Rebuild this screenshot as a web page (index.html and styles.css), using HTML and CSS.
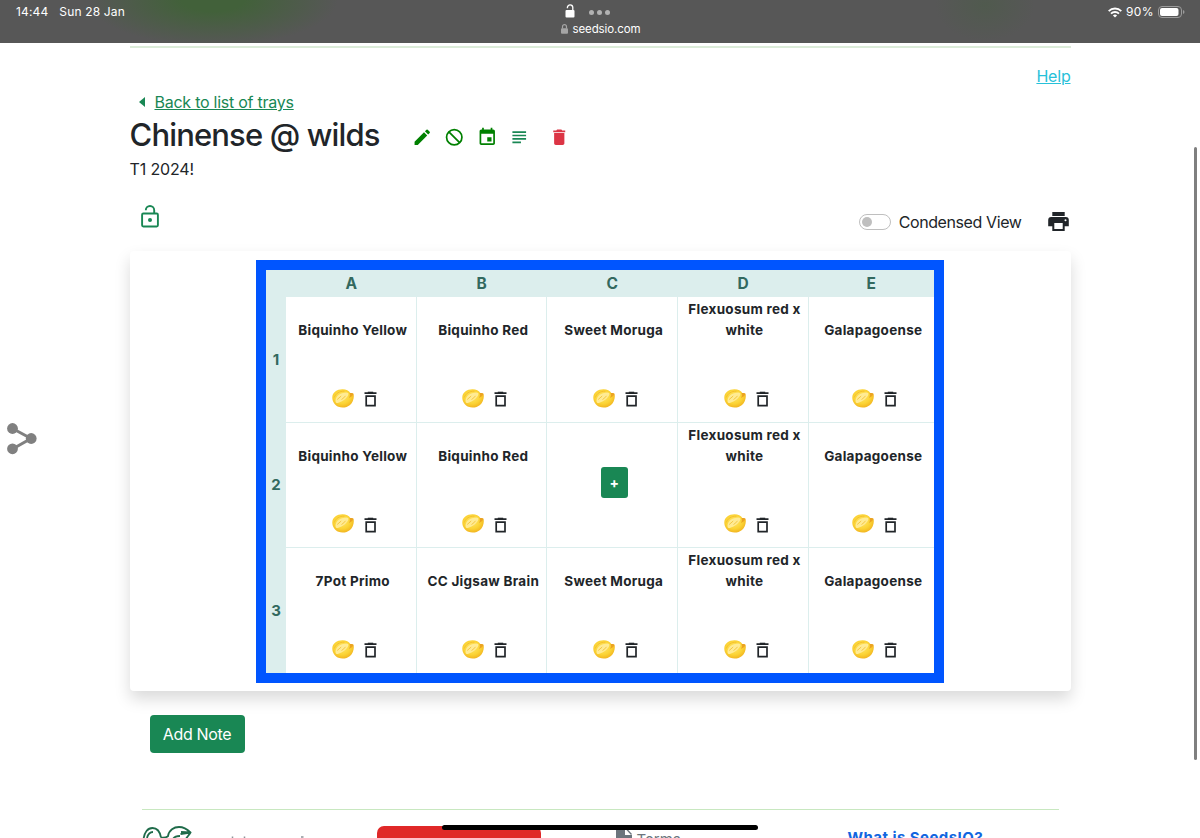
FILE: index.html
```html
<!DOCTYPE html>
<html lang="en">
<head>
  <meta charset="UTF-8">
  <meta name="viewport" content="width=device-width, initial-scale=1.0">
  <title>Chinense @ wilds</title>
  <link rel="stylesheet" href="styles.css">
</head>
<body>

  <svg class="sprite">
    <defs>
      <radialGradient id="seedFill" cx="45%" cy="40%" r="65%">
        <stop offset="0" stop-color="#ffe66d"/>
        <stop offset="0.6" stop-color="#fbd334"/>
        <stop offset="1" stop-color="#f0ae1c"/>
      </radialGradient>
    </defs>
    <symbol id="seed" viewBox="0 0 22 19">
      <path fill="url(#seedFill)" d="M.300 8.500C.300 3.500 5 .300 10.500.300c3.500 0 6.500 1.500 8 3.900 1.700-.200 3 .3 3.200 1.600.5 3.200-.7 7.700-3.700 10.200-3 2.600-7.900 3.300-11.500 1.800C2.700 16.300.300 12.500.300 8.500z"/>
      <path fill="#ffeb94" d="M3.500 12C3.500 7.500 8 3.800 14.500 3.600c1.600 0 2.300.900 1.800 2.200-1 3-5.300 6.900-10.500 8.200-1.400.300-2.300-.500-2.300-2z"/>
      <path fill="none" stroke="#f2c23d" stroke-width=".9" d="M5.200 10.500l4-3.500M9.500 10.500c1.800-1 3-2.200 4-3.700"/>
      <path fill="none" stroke="#f3bd2c" stroke-width=".9" d="M2.300 8.500C3.500 4.500 7.500 2 12.500 2.200"/>
      <path fill="#eba322" d="M17.500 4.200c.800 1.500.5 3-.6 4.800 1.800-.700 3.500-2 4.800-4-.8-1-2.500-1.200-4.200-.800z"/>
    </symbol>
    <symbol id="bin" viewBox="0 0 13 16">
      <path fill="none" stroke="#212529" stroke-width="1.700" d="M2.200 5.100h8.800v9.500H2.200zM.500 2.200h12"/>
      <path fill="#212529" d="M3.800.700h5.400v1.600H3.800z"/>
    </symbol>
  </svg>

  <header class="status-bar">
    <div class="status-left"><span>14:44</span><span>Sun 28 Jan</span></div>
    <div class="status-center">
      <div class="status-icons">
        <svg width="10" height="14" viewBox="0 0 10 14"><path fill="#fff" d="M1.500 6h7q1 0 1 1v5.500q0 1-1 1h-7q-1 0-1-1V7q0-1 1-1z"/><path fill="none" stroke="#fff" stroke-width="1.300" d="M7.800 6.500V3.600a2.700 2.700 0 0 0-5.400 0v.600"/></svg>
        <span class="dots"><i></i><i></i><i></i></span>
      </div>
      <div class="site">
        <svg width="7" height="10" viewBox="0 0 7 10"><rect y="4.200" width="7" height="5.600" rx="1" fill="#a5a5a5"/><path fill="none" stroke="#a5a5a5" stroke-width="1.200" d="M1.500 4.500V2.700a2 2 0 0 1 4 0v1.800"/></svg>
        <span>seedsio.com</span>
      </div>
    </div>
    <div class="status-right">
      <svg width="14" height="11" viewBox="0 0 14 11"><path fill="none" stroke="#fff" stroke-width="1.900" d="M.700 4.100a9 9 0 0 1 12.600 0M3 6.600a5.700 5.700 0 0 1 8 0"/><path fill="#fff" d="M7 10.600L4.900 8.500a3 3 0 0 1 4.200 0z"/></svg>
      <span>90%</span>
      <svg width="27" height="12" viewBox="0 0 27 12"><rect x=".5" y=".5" width="23" height="11" rx="3.500" fill="none" stroke="#9b9b9b"/><rect x="2" y="2" width="18.500" height="8" rx="2" fill="#fff"/><path fill="#9b9b9b" d="M25 4v4q1.500-.500 1.500-2T25 4z"/></svg>
    </div>
  </header>

  <main class="container">
    <div class="help-row"><a class="help" href="#">Help</a></div>

    <div class="back-row">
      <svg width="6" height="10" viewBox="0 0 6 10"><path fill="#198754" d="M6 0v10L0 5z"/></svg>
      <a href="#">Back to list of trays</a>
    </div>

    <div class="title-row">
      <h1>Chinense @ wilds</h1>
      <div class="actions">
        <svg viewBox="0 0 24 24" fill="green"><path d="M3 17.250V21h3.750L17.810 9.940l-3.750-3.750L3 17.250zM20.710 7.040a1 1 0 0 0 0-1.410l-2.340-2.340a1 1 0 0 0-1.410 0l-1.830 1.830 3.750 3.750 1.830-1.830z"/></svg>
        <svg viewBox="0 0 24 24" fill="none" stroke="green" stroke-width="2"><circle cx="12" cy="12" r="9"/><path d="M5.700 5.700l12.600 12.600"/></svg>
        <svg viewBox="0 0 24 24" fill="green"><path d="M17 12h-5v5h5v-5zM16 1v2H8V1H6v2H5c-1.110 0-2 .9-2 2v14c0 1.100.890 2 2 2h14c1.100 0 2-.9 2-2V5c0-1.100-.9-2-2-2h-1V1h-2zm3 18H5V8h14v11z"/></svg>
        <svg viewBox="0 0 24 24" fill="#198754"><path d="M4 5h16v1.900H4zM4 9h16v1.900H4zM4 13h16v1.900H4zM4 17h10v1.900H4z"/></svg>
        <svg class="delete" viewBox="0 0 24 24" fill="#dc3545"><path d="M6 19c0 1.100.9 2 2 2h8c1.100 0 2-.9 2-2V7H6v12zM19 4h-3.500l-1-1h-5l-1 1H5v2h14V4z"/></svg>
      </div>
    </div>
    <p class="subtitle">T1 2024!</p>

    <div class="tools">
      <svg class="unlock" viewBox="0 0 18 23"><rect x="1.100" y="8.500" width="15.800" height="13" rx="1.200" fill="none" stroke="#198754" stroke-width="1.900"/><path fill="none" stroke="#198754" stroke-width="1.900" d="M13.200 8.500V5.200a4.200 4.200 0 0 0-8.400 0"/><circle cx="9" cy="15" r="2" fill="#198754"/></svg>
      <div class="view-tools">
        <span class="switch"></span>
        <span class="switch-label">Condensed View</span>
        <svg class="print" width="21" height="19" viewBox="0 0 21 19"><path fill="#212529" fill-rule="evenodd" d="M4.300 0h12.400v4H4.300zM3.200 5h14.600a3 3 0 0 1 3 3v6.300h-4.100V19H4.300v-4.700H.2V8a3 3 0 0 1 3-3zm3.100 6v6h8.400v-6zM17.500 7.200a1 1 0 1 0 0 2 1 1 0 0 0 0-2z"/></svg>
      </div>
    </div>

    <section class="card">
      <div class="tray">
        <div class="head"></div>
        <div class="head">A</div>
        <div class="head">B</div>
        <div class="head">C</div>
        <div class="head">D</div>
        <div class="head">E</div>

        <div class="row-head">1</div>
        <div class="cell"><div class="name">Biquinho Yellow</div><div class="cell-icons"><svg class="seed"><use href="#seed"/></svg><svg class="bin"><use href="#bin"/></svg></div></div>
        <div class="cell"><div class="name">Biquinho Red</div><div class="cell-icons"><svg class="seed"><use href="#seed"/></svg><svg class="bin"><use href="#bin"/></svg></div></div>
        <div class="cell"><div class="name">Sweet Moruga</div><div class="cell-icons"><svg class="seed"><use href="#seed"/></svg><svg class="bin"><use href="#bin"/></svg></div></div>
        <div class="cell"><div class="name">Flexuosum red x<br>white</div><div class="cell-icons"><svg class="seed"><use href="#seed"/></svg><svg class="bin"><use href="#bin"/></svg></div></div>
        <div class="cell"><div class="name">Galapagoense</div><div class="cell-icons"><svg class="seed"><use href="#seed"/></svg><svg class="bin"><use href="#bin"/></svg></div></div>

        <div class="row-head">2</div>
        <div class="cell"><div class="name">Biquinho Yellow</div><div class="cell-icons"><svg class="seed"><use href="#seed"/></svg><svg class="bin"><use href="#bin"/></svg></div></div>
        <div class="cell"><div class="name">Biquinho Red</div><div class="cell-icons"><svg class="seed"><use href="#seed"/></svg><svg class="bin"><use href="#bin"/></svg></div></div>
        <div class="cell empty"><button class="add">+</button></div>
        <div class="cell"><div class="name">Flexuosum red x<br>white</div><div class="cell-icons"><svg class="seed"><use href="#seed"/></svg><svg class="bin"><use href="#bin"/></svg></div></div>
        <div class="cell"><div class="name">Galapagoense</div><div class="cell-icons"><svg class="seed"><use href="#seed"/></svg><svg class="bin"><use href="#bin"/></svg></div></div>

        <div class="row-head">3</div>
        <div class="cell"><div class="name">7Pot Primo</div><div class="cell-icons"><svg class="seed"><use href="#seed"/></svg><svg class="bin"><use href="#bin"/></svg></div></div>
        <div class="cell"><div class="name">CC Jigsaw Brain</div><div class="cell-icons"><svg class="seed"><use href="#seed"/></svg><svg class="bin"><use href="#bin"/></svg></div></div>
        <div class="cell"><div class="name">Sweet Moruga</div><div class="cell-icons"><svg class="seed"><use href="#seed"/></svg><svg class="bin"><use href="#bin"/></svg></div></div>
        <div class="cell"><div class="name">Flexuosum red x<br>white</div><div class="cell-icons"><svg class="seed"><use href="#seed"/></svg><svg class="bin"><use href="#bin"/></svg></div></div>
        <div class="cell"><div class="name">Galapagoense</div><div class="cell-icons"><svg class="seed"><use href="#seed"/></svg><svg class="bin"><use href="#bin"/></svg></div></div>
      </div>
    </section>

    <button class="add-note">Add Note</button>

    <footer class="footer">
      <svg class="logo" width="170" height="28" viewBox="0 0 170 28" fill="none" stroke="#1f6b4a" stroke-width="1.800"><path d="M1.500 14C2 6 6 2 10.500 2c5 0 7.500 4 8.500 9.500M5 12c1-4 3-6 6-6M19 11.500c2 .5 5 0 7.500-1.500M26 10C27 4 32 1 37 1c5 0 8 2 11.500 5.500-1 2-3 4-5 7M39 6l9.500.500-10 1.500M31 13c1-2 4-3 7-3"/><path stroke="#8d9399" stroke-width="1.500" d="M90.500 10.500v3M102.500 10.500v3M159 11h2.500"/></svg>
      <div class="donate"></div>
      <a class="terms" href="#"><svg width="16" height="20" viewBox="0 0 16 20"><path fill="#6c757d" d="M2 0h7v7h7v11q0 2-2 2H2q-2 0-2-2V2q0-2 2-2z"/><path fill="none" stroke="#6c757d" stroke-width="1.300" d="M10 .500L15.500 6.500"/></svg><span>Terms</span></a>
      <a class="about" href="#">What is SeedsIO?</a>
    </footer>
  </main>

  <!-- side share button -->
  <svg class="share" width="30" height="32" viewBox="0 0 30 32"><path fill="none" stroke="#808080" stroke-width="3" d="M5.500 5.500L24 15.500 5.500 26"/><g fill="#808080"><circle cx="5.500" cy="5.500" r="5.400"/><circle cx="24.200" cy="15.500" r="5.400"/><circle cx="5.500" cy="25.800" r="5.400"/></g></svg>
  <div class="scrollbar"></div>
  <div class="home-bar"></div>

</body>
</html>
```
FILE: styles.css
```css
* {
  box-sizing: border-box;
}

body {
  margin: 0;
  height: 838px;
  overflow: hidden;
  background: #fff;
  color: #212529;
  font-family: Inter, "Liberation Sans", sans-serif;
  font-size: 16px;
  line-height: 24px;
}

svg {
  display: block;
  flex: none;
}

button {
  font-family: inherit;
  border: none;
  background: #198754;
  color: #fff;
}

.sprite {
  position: absolute;
  width: 0;
  height: 0;
}

/* iPad status bar */
.status-bar {
  height: 43px;
  padding: 4px 15px 0 16px;
  display: grid;
  grid-template-columns: 1fr auto 1fr;
  background:
    radial-gradient(ellipse 125px 46px at 213px 0, #42613a 0, #42613a 25%, transparent 100%),
    radial-gradient(ellipse 50px 36px at 985px 5px, #505a4e, transparent),
    #575757;
  color: #fff;
  font-size: 12px;
  line-height: 16px;
  letter-spacing: 0.4px;
}

.status-left {
  display: flex;
  gap: 11px;
  letter-spacing: 0.15px;
}

.status-center {
  display: flex;
  flex-direction: column;
  align-items: center;
}

.status-icons {
  width: 80px;
  height: 14px;
  display: flex;
  align-items: center;
  gap: 14px;
  padding-left: 4px;
}

.status-icons svg {
  margin-top: -1px;
}

.dots {
  display: flex;
  gap: 3px;
  padding-top: 2px;
}

.dots i {
  width: 5px;
  height: 5px;
  border-radius: 50%;
  background: #b2b2b2;
}

.site {
  display: flex;
  align-items: center;
  gap: 4px;
  margin-top: 3px;
  padding-left: 1px;
  font-size: 11.5px;
  letter-spacing: -0.1px;
}

.status-right {
  display: flex;
  align-items: center;
  justify-content: flex-end;
  gap: 4px;
  height: 16px;
}

.container {
  width: 941px;
  margin: 3px auto 0;
  border-top: 2px solid #dcecd9;
}

.help-row {
  display: flex;
  justify-content: flex-end;
  padding-top: 16px;
}

.help {
  color: #27c1d9;
  letter-spacing: -0.2px;
}

.back-row {
  display: flex;
  align-items: center;
  gap: 10px;
  margin-top: 2px;
  padding-left: 9px;
}

.back-row a {
  color: #198754;
  letter-spacing: -0.25px;
}

.title-row {
  display: flex;
  align-items: center;
  height: 38px;
  margin-top: 2px;
}

h1 {
  width: 282px;
  margin: 0;
  font-size: 31px;
  font-weight: 500;
  line-height: 38px;
  letter-spacing: -0.85px;
  white-space: nowrap;
}

.actions {
  display: flex;
  gap: 12px;
  padding-top: 4px;
}

.actions svg {
  width: 20.5px;
  height: 20.5px;
}

.actions .delete {
  margin-left: 7px;
}

.subtitle {
  margin: 3px 0 0;
  letter-spacing: -0.15px;
}

.tools {
  height: 70px;
  display: flex;
  justify-content: space-between;
  padding: 24px 2px 0 11px;
}

.unlock {
  width: 18px;
  height: 23px;
}

.view-tools {
  display: flex;
  align-items: center;
  height: 33px;
}

.switch {
  width: 32px;
  height: 16px;
  margin-right: 8px;
  padding: 2px;
  border: 1px solid #bfbfbf;
  border-radius: 8px;
}

.switch::before {
  content: "";
  display: block;
  width: 10.5px;
  height: 10.5px;
  border-radius: 50%;
  background: #bfbfbf;
}

.switch-label {
  letter-spacing: -0.4px;
}

.print {
  margin-left: 26px;
}

.card {
  height: 440px;
  padding-top: 9px;
  border-radius: 4px;
  box-shadow: 0 8px 16px rgba(0, 0, 0, 0.15);
}

.tray {
  width: 688px;
  height: 423px;
  margin: 0 auto;
  display: grid;
  grid-template-columns: 20px 130.5px 130.5px 130.5px 131px 125.5px;
  grid-template-rows: 27px 125.5px 125.5px 125px;
  border: 10px solid #0055ff;
}

.head,
.row-head {
  display: flex;
  align-items: center;
  justify-content: center;
  background: #dceeed;
  color: #33695f;
  font-size: 15.5px;
  font-weight: 700;
}

.row-head {
  font-size: 15px;
}

.cell {
  border-right: 1px solid #dceeed;
  border-bottom: 1px solid #dceeed;
}

.cell:nth-child(6n) {
  border-right: none;
}

.cell:nth-child(n + 19) {
  border-bottom: none;
}

.name {
  height: 44px;
  padding-left: 4px;
  display: flex;
  align-items: flex-end;
  justify-content: center;
  font-size: 13.5px;
  font-weight: 700;
  line-height: 21px;
  letter-spacing: 0.28px;
  text-align: center;
}

.cell-icons {
  display: flex;
  align-items: center;
  justify-content: center;
  gap: 10px;
  padding-left: 7px;
  margin-top: 47.5px;
}

.seed {
  width: 22px;
  height: 19px;
}

.bin {
  width: 13px;
  height: 16px;
  margin-top: 2px;
}

.empty {
  display: flex;
  align-items: center;
  justify-content: center;
  padding-left: 5px;
}

.add {
  width: 27px;
  height: 31px;
  padding: 0;
  margin-bottom: 4px;
  border-radius: 3px;
  font-size: 14px;
  font-weight: 700;
}

.add-note {
  display: block;
  width: 95px;
  height: 38px;
  margin: 24px 0 0 20px;
  padding: 0;
  border-radius: 4px;
  font-size: 16px;
  letter-spacing: -0.35px;
}

.footer {
  width: 917px;
  height: 29px;
  margin: 56px auto 0;
  padding-top: 16px;
  overflow: hidden;
  display: grid;
  grid-template-columns: 235px 239px 232px 1fr;
  border-top: 1px solid #c8e8c0;
}

.donate {
  width: 164px;
  height: 30px;
  border-radius: 7px 7px 0 0;
  background: #e02828;
}

.terms {
  display: flex;
  align-items: flex-start;
  gap: 5px;
  padding-top: 2px;
  color: #6c757d;
  font-size: 15px;
  text-decoration: none;
}

.about {
  color: #1266e0;
  font-size: 15px;
  font-weight: 700;
  letter-spacing: 0.45px;
  text-decoration: none;
}

.share {
  position: fixed;
  left: 7px;
  top: 423px;
}

.scrollbar {
  position: fixed;
  top: 147px;
  right: 3px;
  width: 3px;
  height: 613px;
  border-radius: 2px;
  background: #7f7f7f;
}

.home-bar {
  position: fixed;
  left: 442px;
  bottom: 8px;
  width: 316px;
  height: 5px;
  border-radius: 3px;
  background: #000;
}
```
